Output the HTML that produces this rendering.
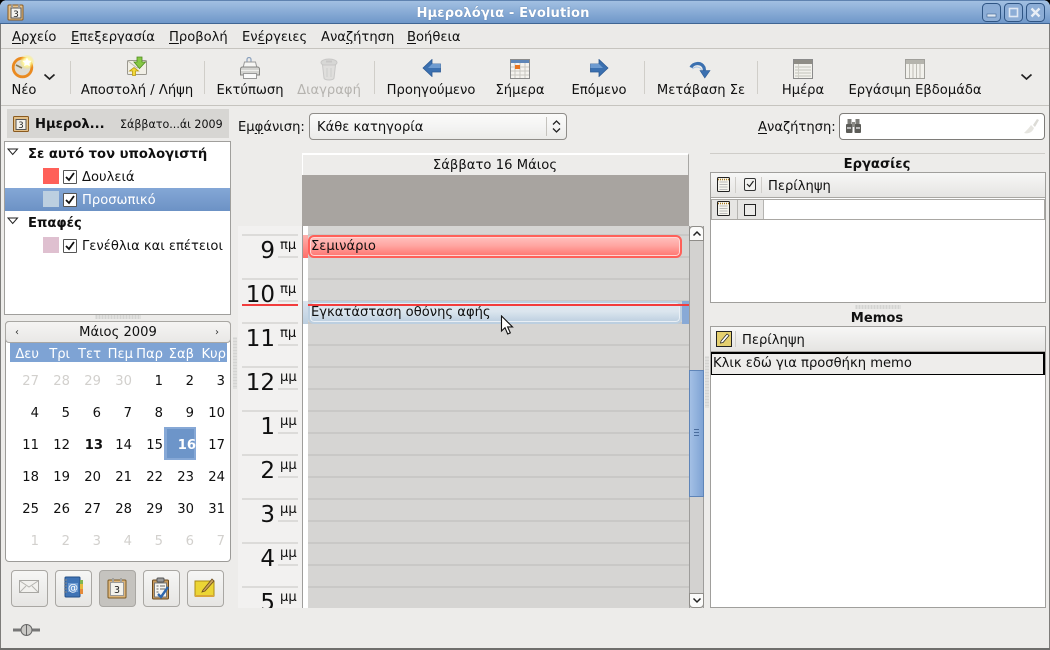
<!DOCTYPE html>
<html><head><meta charset="utf-8"><style>
html,body{margin:0;padding:0;background:#000}
#w{position:relative;width:1050px;height:650px;overflow:hidden;background:#edecea;font:13.13px "DejaVu Sans","Liberation Sans",sans-serif;color:#101010;border-radius:7px 7px 0 0}
#w div,#w span.t,#w svg{position:absolute}
.t{position:absolute;white-space:nowrap;line-height:28px;height:28px}
.c{transform:translateX(-50%)}
.r{transform:translateX(-100%)}
u{text-decoration:underline;text-underline-offset:2px}
.b{font-weight:bold}
.sep{width:1px;height:33px;top:61px;background:#d0cec9}
.dn{color:#fff;transform:translateX(-100%);top:345px}
.d{transform:translateX(-100%)}
.g{color:#d2d0cd}
.h{font-size:23px;line-height:31px;height:31px;transform:translateX(-100%)}
.ap{font-size:13.13px;color:#111;line-height:24px;height:24px}
.ml{left:242px;width:56px;height:2px;background:#dcdbd9}
.sl{left:278px;width:20px;height:2px;background:#dcdbd9}
.gl{left:308px;width:381px;height:2px;background:#c9c8c6}
.nb{width:35px;height:35px;top:570px;border:1px solid #a9a7a3;border-radius:4px;background:linear-gradient(#f6f6f5,#e6e5e3)}
.cb{width:12px;height:12px;border:1px solid #555;border-radius:1px;background:#fff}
</style></head><body><div id="w">

<!-- title bar -->
<div style="left:0;top:0;width:1050px;height:23px;background:linear-gradient(#a2c0e2,#6f97c9);border-top:1px solid #5f83b0;box-sizing:border-box"></div>
<div style="left:0;top:23px;width:1050px;height:1px;background:#3f6593"></div>
<span class="t c b" style="left:503px;top:0px;color:#fff;letter-spacing:.1px;text-shadow:0 0 1px #4a6f9e">Ημερολόγια - Evolution</span>
<svg style="left:7px;top:3px" width="18" height="18" viewBox="0 0 18 18"><rect x="1" y="2" width="15" height="15" rx="1" fill="#e6c48e" stroke="#8a5a1e"/><rect x="4" y="5" width="10" height="10" fill="#f4f3ee" stroke="#555"/><rect x="4" y="1" width="2" height="4" fill="#999"/><rect x="11" y="1" width="2" height="4" fill="#999"/><text x="9" y="14" font-size="9" text-anchor="middle" fill="#222" font-family="DejaVu Sans">3</text></svg>
<svg style="left:982px;top:3px" width="66" height="19" viewBox="0 0 66 19" fill="none"><rect x="0.5" y="0.5" width="18" height="18" rx="4" stroke="#2f5584" fill="#8cadd6"/><rect x="5" y="11" width="9" height="3" fill="#dfe8f3" stroke="#3d6290" stroke-width=".6"/><rect x="22.5" y="0.5" width="18" height="18" rx="4" stroke="#2f5584" fill="#8cadd6"/><rect x="27.500" y="5.500" width="8" height="8" stroke="#dfe8f3" stroke-width="1.600"/><rect x="44.5" y="0.5" width="18" height="18" rx="4" stroke="#2f5584" fill="#8cadd6"/><path d="M49.500 5.500l8 8M57.500 5.500l-8 8" stroke="#e8eef6" stroke-width="2.400"/></svg>

<!-- menu -->
<div style="left:0;top:24px;width:1050px;height:24px;background:#ebeae8"></div>
<div style="left:0;top:48px;width:1050px;height:1px;background:#c6c4bf"></div>
<span class="t" style="left:12px;top:24px"><u>Α</u>ρχείο</span>
<span class="t" style="left:71px;top:24px"><u>Ε</u>πεξεργασία</span>
<span class="t" style="left:169px;top:24px"><u>Π</u>ροβολή</span>
<span class="t" style="left:242px;top:24px">Εν<u>έ</u>ργειες</span>
<span class="t" style="left:321px;top:24px">Ανα<u>ζ</u>ήτηση</span>
<span class="t" style="left:407px;top:24px"><u>Β</u>οήθεια</span>

<!-- toolbar -->
<div style="left:0;top:105px;width:1050px;height:1px;background:#c6c4bf"></div>
<div class="sep" style="left:70px"></div><div class="sep" style="left:204px"></div><div class="sep" style="left:374px"></div><div class="sep" style="left:644px"></div><div class="sep" style="left:757px"></div>
<span class="t c" style="left:24px;top:77px">Νέο</span>
<span class="t c" style="left:137px;top:77px">Αποστολή / Λήψη</span>
<span class="t c" style="left:250px;top:77px">Εκτύπωση</span>
<span class="t c" style="left:329px;top:77px;color:#b5b3af">Διαγραφή</span>
<span class="t c" style="left:431px;top:77px">Προηγούμενο</span>
<span class="t c" style="left:520px;top:77px">Σήμερα</span>
<span class="t c" style="left:599px;top:77px">Επόμενο</span>
<span class="t c" style="left:701px;top:77px">Μετάβαση Σε</span>
<span class="t c" style="left:803px;top:77px">Ημέρα</span>
<span class="t c" style="left:915px;top:77px">Εργάσιμη Εβδομάδα</span>
<!-- new -->
<svg style="left:10px;top:55px" width="26" height="25" viewBox="0 0 26 25"><defs><radialGradient id="gs"><stop offset="0" stop-color="#fff"/><stop offset=".5" stop-color="#fff7a0"/><stop offset="1" stop-color="#ffe84a" stop-opacity="0"/></radialGradient></defs><circle cx="12.500" cy="12.500" r="9.300" fill="#dedbd2" stroke="#ea8a20" stroke-width="2.800"/><path d="M12 13L6 10" stroke="#8a7a50" stroke-width="1.600"/><circle cx="17" cy="7" r="7.500" fill="url(#gs)"/><path d="M17 2.500l1.400 3 3.300.4-2.400 2.200.6 3.200-2.900-1.600-2.900 1.600.6-3.200-2.400-2.200 3.300-.4z" fill="#fff"/></svg>
<svg style="left:43px;top:73px" width="13" height="8" viewBox="0 0 13 8"><path d="M1.500 1.500L6.500 6l5-4.500" fill="none" stroke="#222" stroke-width="1.700"/></svg>
<svg style="left:1020px;top:73px" width="13" height="8" viewBox="0 0 13 8"><path d="M1.500 1.500L6.500 6l5-4.500" fill="none" stroke="#222" stroke-width="1.700"/></svg>
<!-- send/receive -->
<svg style="left:126px;top:56px" width="22" height="21" viewBox="0 0 22 21"><rect x="1.500" y="4.500" width="19" height="14" rx="1" fill="#f1efe6" stroke="#9a9890"/><path d="M2 5l9 7 9-7" fill="none" stroke="#bdbbb0"/><path d="M11 1h5v5h3.500L13.500 12.500 8 6h3z" fill="#86c845" stroke="#4f8a1f" stroke-width=".8"/><path d="M6.500 19.500V15H3.500L8 11.500l4.500 3.500H9.500v4.500z" fill="#f2d93a" stroke="#b99a12" stroke-width=".8"/></svg>
<!-- print -->
<svg style="left:238px;top:57px" width="24" height="24" viewBox="0 0 24 24"><path d="M9 6V2.500a2 2 0 0 1 4 0V6" fill="none" stroke="#8ba1bd" stroke-width="1.200"/><path d="M6.500 5h11l1.500 6H5z" fill="#f6f6f4" stroke="#999"/><path d="M2.500 12a2 2 0 0 1 2-2h15a2 2 0 0 1 2 2v6h-19z" fill="#d4d4d1" stroke="#858582"/><rect x="5.500" y="16.500" width="13" height="5" fill="#fafafa" stroke="#999"/><rect x="3" y="13" width="18" height="1" fill="#efefed"/></svg>
<!-- delete -->
<svg style="left:319px;top:57px" width="20" height="24" viewBox="0 0 20 24" opacity=".55"><ellipse cx="10" cy="5.500" rx="8" ry="3.500" fill="#c6c6c4" stroke="#aaa"/><path d="M3.500 8l1.500 13a5 2 0 0 0 10 0L16.500 8z" fill="#d4d4d2" stroke="#aaa"/><path d="M8 11v9M12 11v9" stroke="#b5b5b3"/><rect x="7" y="3.500" width="6" height="2" fill="#aaa"/></svg>
<!-- prev -->
<svg style="left:422px;top:59px" width="20" height="18" viewBox="0 0 20 18"><path d="M1 9l9-8.500V5h8.500v8H10v4.500z" fill="#3b70b0" stroke="#2c5a94" stroke-width=".8"/><path d="M10 5h8.500v4H6z" fill="#6e9bd0"/></svg>
<!-- today -->
<svg style="left:510px;top:59px" width="20" height="20" viewBox="0 0 20 20"><rect x=".5" y=".5" width="19" height="19" fill="#f5f3ef" stroke="#8b8b8b"/><rect x="1" y="1" width="18" height="3" fill="#5f86b8"/><path d="M1 8h18M1 12h18M1 16h18M5 4v15M10 4v15M15 4v15" stroke="#c9c7c2"/><rect x="5" y="6" width="5" height="4" fill="#e8731e"/></svg>
<!-- next -->
<svg style="left:589px;top:59px" width="20" height="18" viewBox="0 0 20 18"><path d="M19 9L10 .5V5H1.500v8H10v4.500z" fill="#3b70b0" stroke="#2c5a94" stroke-width=".8"/><path d="M10 5H1.500v4H14z" fill="#6e9bd0"/></svg>
<!-- go to -->
<svg style="left:689px;top:60px" width="23" height="19" viewBox="0 0 23 19"><path d="M2 7.500C4 3 12 1.500 15 7.500l.5 3" fill="none" stroke="#3b70b0" stroke-width="3.200"/><path d="M3.500 9C6 6 11 6.500 12.500 10" fill="none" stroke="#a9c4e4" stroke-width="1"/><path d="M11 10.500h10L15.800 18z" fill="#3b70b0" stroke="#2c5a94" stroke-width=".6"/></svg>
<!-- day -->
<svg style="left:793px;top:59px" width="20" height="20" viewBox="0 0 20 20"><rect x=".5" y=".5" width="19" height="19" fill="#f2f1ec" stroke="#8b8b8b"/><rect x="1" y="1" width="18" height="4" fill="#8f8d86"/><path d="M2 8h16M2 11h16M2 14h16M2 17h16" stroke="#c3c2ba"/><path d="M5.500 5v14" stroke="#d0cfc8"/></svg>
<!-- workweek -->
<svg style="left:905px;top:59px" width="20" height="20" viewBox="0 0 20 20"><rect x=".5" y=".5" width="19" height="19" fill="#f2f1ec" stroke="#a09f9a"/><rect x="1" y="1" width="18" height="4" fill="#b5b4ad"/><path d="M4.500 5v14M8 5v14M11.500 5v14M15 5v14" stroke="#bdbcb5"/></svg>

<!-- sidebar head -->
<div style="left:7px;top:109px;width:222px;height:29px;background:#d7d6d3"></div>
<svg style="left:13px;top:115px" width="17" height="17" viewBox="0 0 17 17"><rect x=".5" y="1.500" width="15" height="15" rx="1" fill="#e3c088" stroke="#8a5a1e"/><rect x="3" y="4.500" width="10" height="10" fill="#f4f3ee" stroke="#555"/><text x="8" y="13" font-size="8.500" text-anchor="middle" fill="#222" font-family="DejaVu Sans">3</text></svg>
<span class="t b" style="left:35px;top:111px">Ημερολ...</span>
<span class="t" style="left:120px;top:111px;font-size:11.1px">Σάββατο...άι 2009</span>

<!-- tree -->
<div style="left:4px;top:141px;width:227px;height:174px;box-sizing:border-box;border:1px solid #a09f9c;background:#fff"></div>
<div style="left:5px;top:188px;width:225px;height:23px;background:linear-gradient(#84a7d6,#6c92c5)"></div>
<svg style="left:7px;top:148px" width="12" height="8" viewBox="0 0 12 8"><path d="M1 1h9.500L5.700 6.500z" fill="#fff" stroke="#222"/></svg>
<span class="t b" style="left:28px;top:141px">Σε αυτό τον υπολογιστή</span>
<div style="left:43px;top:168px;width:16px;height:16px;background:#ff6059"></div>
<div class="cb" style="left:63px;top:170px"></div><svg style="left:64px;top:171px" width="12" height="12" viewBox="0 0 12 12"><path d="M2 6l3 3 5-7" fill="none" stroke="#111" stroke-width="1.800"/></svg>
<span class="t" style="left:82px;top:164px">Δουλειά</span>
<div style="left:43px;top:191px;width:16px;height:16px;background:#bccfe0"></div>
<div class="cb" style="left:63px;top:193px"></div><svg style="left:64px;top:194px" width="12" height="12" viewBox="0 0 12 12"><path d="M2 6l3 3 5-7" fill="none" stroke="#111" stroke-width="1.800"/></svg>
<span class="t" style="left:82px;top:187px;color:#fff">Προσωπικό</span>
<svg style="left:7px;top:217px" width="12" height="8" viewBox="0 0 12 8"><path d="M1 1h9.500L5.700 6.500z" fill="#fff" stroke="#222"/></svg>
<span class="t b" style="left:28px;top:210px">Επαφές</span>
<div style="left:43px;top:237px;width:16px;height:16px;background:#dfc0d0"></div>
<div class="cb" style="left:63px;top:239px"></div><svg style="left:64px;top:240px" width="12" height="12" viewBox="0 0 12 12"><path d="M2 6l3 3 5-7" fill="none" stroke="#111" stroke-width="1.800"/></svg>
<span class="t" style="left:82px;top:233px">Γενέθλια και επέτειοι</span>
<div style="left:95px;top:315px;width:46px;height:4px;background-image:radial-gradient(#bbb 40%,transparent 45%);background-size:3px 2px"></div>

<!-- mini calendar -->
<div style="left:5px;top:321px;width:226px;height:241px;box-sizing:border-box;border:1px solid #9c9b98;border-radius:4px;background:#fff"></div>
<div style="left:5px;top:321px;width:226px;height:22px;box-sizing:border-box;border:1px solid #a9a7a3;border-radius:4px;background:linear-gradient(#f5f4f3,#e9e8e6)"></div>
<span class="t" style="left:15px;top:319px;font-size:10px;color:#333">‹</span>
<span class="t" style="left:215px;top:319px;font-size:10px;color:#333">›</span>
<span class="t c" style="left:118px;top:319px">Μάιος 2009</span>
<div style="left:10px;top:343px;width:217px;height:19px;background:#7ea3d4"></div>
<span class="t dn" style="left:39px;top:341px">Δευ</span><span class="t dn" style="left:70px;top:341px">Τρι</span><span class="t dn" style="left:101px;top:341px">Τετ</span><span class="t dn" style="left:133px;top:341px">Πεμ</span><span class="t dn" style="left:163px;top:341px">Παρ</span><span class="t dn" style="left:194px;top:341px">Σαβ</span><span class="t dn" style="left:226px;top:341px">Κυρ</span>
<div style="left:164px;top:427px;width:32px;height:33px;background:#86a8d6"></div>
<div style="left:167px;top:429px;width:27px;height:29px;background:#6d95c9"></div>
<span class="t d g" style="left:39px;top:368px">27</span><span class="t d g" style="left:70px;top:368px">28</span><span class="t d g" style="left:101px;top:368px">29</span><span class="t d g" style="left:132px;top:368px">30</span><span class="t d" style="left:163px;top:368px">1</span><span class="t d" style="left:194px;top:368px">2</span><span class="t d" style="left:225px;top:368px">3</span>
<span class="t d" style="left:39px;top:400px">4</span><span class="t d" style="left:70px;top:400px">5</span><span class="t d" style="left:101px;top:400px">6</span><span class="t d" style="left:132px;top:400px">7</span><span class="t d" style="left:163px;top:400px">8</span><span class="t d" style="left:194px;top:400px">9</span><span class="t d" style="left:225px;top:400px">10</span>
<span class="t d" style="left:39px;top:432px">11</span><span class="t d" style="left:70px;top:432px">12</span><span class="t d b" style="left:103px;top:432px">13</span><span class="t d" style="left:132px;top:432px">14</span><span class="t d" style="left:163px;top:432px">15</span><span class="t d b" style="left:196px;top:432px;color:#fff">16</span><span class="t d" style="left:225px;top:432px">17</span>
<span class="t d" style="left:39px;top:464px">18</span><span class="t d" style="left:70px;top:464px">19</span><span class="t d" style="left:101px;top:464px">20</span><span class="t d" style="left:132px;top:464px">21</span><span class="t d" style="left:163px;top:464px">22</span><span class="t d" style="left:194px;top:464px">23</span><span class="t d" style="left:225px;top:464px">24</span>
<span class="t d" style="left:39px;top:496px">25</span><span class="t d" style="left:70px;top:496px">26</span><span class="t d" style="left:101px;top:496px">27</span><span class="t d" style="left:132px;top:496px">28</span><span class="t d" style="left:163px;top:496px">29</span><span class="t d" style="left:194px;top:496px">30</span><span class="t d" style="left:225px;top:496px">31</span>
<span class="t d g" style="left:39px;top:528px">1</span><span class="t d g" style="left:70px;top:528px">2</span><span class="t d g" style="left:101px;top:528px">3</span><span class="t d g" style="left:132px;top:528px">4</span><span class="t d g" style="left:163px;top:528px">5</span><span class="t d g" style="left:194px;top:528px">6</span><span class="t d g" style="left:225px;top:528px">7</span>

<!-- switcher -->
<div class="nb" style="left:11px"></div><div class="nb" style="left:55px"></div><div class="nb" style="left:99px;background:#c5c3bf"></div><div class="nb" style="left:143px"></div><div class="nb" style="left:187px"></div>
<svg style="left:19px;top:579px" width="20" height="16" viewBox="0 0 20 16"><rect x=".5" y="1.500" width="19" height="12" fill="#f2f1ee" stroke="#a8a7a3"/><path d="M1 2l9 6 9-6M1 13l6-6M19 13l-6-6" fill="none" stroke="#b5b4b0"/></svg>
<svg style="left:62px;top:576px" width="23" height="23" viewBox="0 0 23 23"><rect x="3" y="1" width="15" height="20" rx="1" fill="#3f73b5" stroke="#234f88"/><rect x="18" y="4" width="3" height="4" fill="#7fb650"/><rect x="18" y="8" width="3" height="5" fill="#e7b93d"/><rect x="18" y="13" width="3" height="5" fill="#e58a3a"/><path d="M2 4h3M2 7h3M2 10h3M2 13h3M2 16h3" stroke="#888"/><rect x="6" y="7" width="10" height="9" fill="#6c9ad2"/><text x="11" y="15" font-size="10" text-anchor="middle" fill="#fff" font-family="DejaVu Sans">@</text></svg>
<svg style="left:107px;top:577px" width="21" height="22" viewBox="0 0 21 22"><rect x="1" y="3" width="18" height="18" rx="1" fill="#ddb67c" stroke="#7c5a24"/><rect x="3.500" y="5.500" width="13" height="13" fill="#f3f2ec" stroke="#999"/><rect x="5" y="1" width="2" height="5" fill="#a3a29e"/><rect x="13" y="1" width="2" height="5" fill="#a3a29e"/><text x="10" y="16" font-size="9.500" text-anchor="middle" fill="#222" font-family="DejaVu Sans">3</text></svg>
<svg style="left:151px;top:577px" width="22" height="23" viewBox="0 0 22 23"><rect x="1.500" y="3" width="16" height="19" rx="1" fill="#c89a5a" stroke="#69481e"/><rect x="3.500" y="6" width="12" height="14" fill="#f5f4ef" stroke="#777"/><rect x="6" y="1" width="7" height="4" rx="1" fill="#999" stroke="#555"/><path d="M5.500 9h2M9 9h5M5.500 12h2M9 12h5M5.500 15h2" stroke="#666"/><path d="M7 17l3 3 7-10" fill="none" stroke="#2f67ad" stroke-width="2.400"/></svg>
<svg style="left:194px;top:577px" width="23" height="22" viewBox="0 0 23 22"><rect x="1" y="4" width="19" height="15" fill="#ecd535" stroke="#ab8c14"/><rect x="1" y="18" width="19" height="2" fill="#d9a63a"/><path d="M9 13l9-11 2 2-9 10-3 1z" fill="#c9a25c" stroke="#6d4d1a" stroke-width=".8"/></svg>

<!-- status -->
<svg style="left:13px;top:622px" width="27" height="16" viewBox="0 0 27 16"><path d="M0 8h9M18 8h9" stroke="#777" stroke-width="3"/><circle cx="13.500" cy="8" r="5.500" fill="#c9c8c5" stroke="#666"/><path d="M13.500 2.500v11" stroke="#666"/></svg>

<!-- filter bar -->
<span class="t" style="left:238px;top:114px">Εμ<u>φ</u>άνιση:</span>
<div style="left:309px;top:113px;width:258px;height:27px;box-sizing:border-box;border:1px solid #8f8d89;border-radius:4px;background:linear-gradient(#fbfbfa,#f4f4f3 50%,#ebebe9)"></div>
<span class="t" style="left:317px;top:114px">Κάθε κατηγορία</span>
<div style="left:546px;top:117px;width:1px;height:19px;background:#c5c3be"></div>
<svg style="left:551px;top:119px" width="11" height="15" viewBox="0 0 11 15"><path d="M2 5.500L5.500 2 9 5.500M2 9.500L5.500 13 9 9.500" fill="none" stroke="#222" stroke-width="1.300"/></svg>
<span class="t" style="left:758px;top:114px"><u>Α</u>ναζήτηση:</span>
<div style="left:839px;top:113px;width:206px;height:27px;box-sizing:border-box;border:1px solid #7e7c79;border-radius:4px;background:#fff"></div>
<svg style="left:845px;top:118px" width="17" height="16" viewBox="0 0 17 16"><rect x="1" y="6" width="6.500" height="9" rx="1" fill="#5c5c58"/><rect x="9.500" y="6" width="6.500" height="9" rx="1" fill="#5c5c58"/><rect x="2.500" y="1" width="4" height="5" fill="#7c7c78"/><rect x="10.500" y="1" width="4" height="5" fill="#7c7c78"/><rect x="7" y="4" width="3" height="5" fill="#8a8a86"/><rect x="2" y="9" width="4" height="2" fill="#bbb"/><rect x="11" y="9" width="4" height="2" fill="#bbb"/></svg>
<svg style="left:1023px;top:117px" width="18" height="18" viewBox="0 0 18 18"><path d="M1 16c4 1 8 0 10-5l-3-3C6 11 4 13 1 16z" fill="#e6e5e0"/><path d="M10 8l4-6 2 1-4 7z" fill="#dcdbd6"/></svg>

<!-- day view -->
<div style="left:302px;top:153px;width:387px;height:23px;box-sizing:border-box;background:#edecea;border-top:2px solid #fff;border-left:1px solid #fff;border-right:1px solid #a8a7a4"></div>
<span class="t c" style="left:495px;top:152px;letter-spacing:.05px">Σάββατο 16 Μάιος</span>
<div style="left:302px;top:175px;width:387px;height:51px;background:#a8a4a0"></div>
<div style="left:238px;top:226px;width:64px;height:382px;background:#f2f1f0"></div>
<div style="left:302px;top:226px;width:1px;height:382px;background:#9e9d9b"></div>
<div style="left:303px;top:226px;width:5px;height:382px;background:#fff"></div>
<div style="left:308px;top:226px;width:381px;height:382px;background:#d6d5d3"></div>

<div class="gl" style="top:234px"></div><div class="gl" style="top:256px"></div><div class="gl" style="top:278px"></div><div class="gl" style="top:300px"></div><div class="gl" style="top:322px"></div><div class="gl" style="top:344px"></div><div class="gl" style="top:366px"></div><div class="gl" style="top:388px"></div><div class="gl" style="top:410px"></div><div class="gl" style="top:432px"></div><div class="gl" style="top:454px"></div><div class="gl" style="top:476px"></div><div class="gl" style="top:498px"></div><div class="gl" style="top:520px"></div><div class="gl" style="top:542px"></div><div class="gl" style="top:564px"></div><div class="gl" style="top:586px"></div>

<div class="ml" style="top:234px"></div><div class="sl" style="top:256px"></div><div class="ml" style="top:278px"></div><div class="sl" style="top:300px"></div><div class="ml" style="top:322px"></div><div class="sl" style="top:344px"></div><div class="ml" style="top:366px"></div><div class="sl" style="top:388px"></div><div class="ml" style="top:410px"></div><div class="sl" style="top:432px"></div><div class="ml" style="top:454px"></div><div class="sl" style="top:476px"></div><div class="ml" style="top:498px"></div><div class="sl" style="top:520px"></div><div class="ml" style="top:542px"></div><div class="sl" style="top:564px"></div><div class="ml" style="top:586px"></div>

<span class="t h" style="left:275px;top:236px">9</span><span class="t ap" style="left:280px;top:234px">πμ</span>
<span class="t h" style="left:275px;top:280px">10</span><span class="t ap" style="left:280px;top:278px">πμ</span>
<span class="t h" style="left:275px;top:324px">11</span><span class="t ap" style="left:280px;top:322px">πμ</span>
<span class="t h" style="left:275px;top:368px">12</span><span class="t ap" style="left:280px;top:366px">μμ</span>
<span class="t h" style="left:275px;top:412px">1</span><span class="t ap" style="left:280px;top:410px">μμ</span>
<span class="t h" style="left:275px;top:456px">2</span><span class="t ap" style="left:280px;top:454px">μμ</span>
<span class="t h" style="left:275px;top:500px">3</span><span class="t ap" style="left:280px;top:498px">μμ</span>
<span class="t h" style="left:275px;top:544px">4</span><span class="t ap" style="left:280px;top:542px">μμ</span>
<div style="left:238px;top:580px;width:64px;height:28px;overflow:hidden"><span class="t h" style="left:37px;top:8px">5</span><span class="t ap" style="left:42px;top:6px">μμ</span></div>

<!-- events -->
<div style="left:303px;top:235px;width:5px;height:23px;background:linear-gradient(#ffb0ac,#ff6f69)"></div>
<div style="left:308px;top:235px;width:374px;height:23px;box-sizing:border-box;border:2px solid #ff6059;border-radius:6px;background:linear-gradient(#ffc0bd,#ffa6a2 45%,#ff7670);box-shadow:inset 0 0 0 1px #ffd6d4"></div>
<span class="t" style="left:311px;top:233px">Σεμινάριο</span>
<div style="left:303px;top:301px;width:5px;height:23px;background:linear-gradient(#dbe4ee,#bccfe0)"></div>
<div style="left:682px;top:301px;width:7px;height:23px;background:#88a9d6"></div>
<div style="left:308px;top:301px;width:374px;height:23px;box-sizing:border-box;border:2px solid #bccfe0;border-radius:6px;background:linear-gradient(#e0e8f0,#dbe5ee 45%,#bccfe0);box-shadow:inset 0 0 0 1px #e9eff5"></div>
<span class="t" style="left:311px;top:299px">Εγκατάσταση οθόνης αφής</span>
<div style="left:242px;top:304px;width:56px;height:2px;background:#f23c3c"></div>
<div style="left:308px;top:304px;width:381px;height:2px;background:#f23c3c"></div>
<svg style="left:500px;top:315px" width="16" height="21" viewBox="0 0 16 21"><path d="M1.500 1v15l3.500-3.300 2.700 6.300 2.600-1.100-2.700-6h4.900z" fill="#fff" stroke="#111" stroke-width="1.100"/></svg>

<!-- scrollbar -->
<div style="left:689px;top:226px;width:15px;height:382px;box-sizing:border-box;background:#d3d2d0;border-left:1px solid #9e9d9b;border-right:1px solid #9e9d9b"></div>
<div style="left:689px;top:226px;width:15px;height:15px;box-sizing:border-box;border:1px solid #8f8d89;border-radius:4px 4px 0 0;background:#fbfbfa"></div>
<svg style="left:692px;top:230px" width="10" height="7" viewBox="0 0 10 7"><path d="M1.500 5.500L5 2l3.500 3.500" fill="none" stroke="#222" stroke-width="1.500"/></svg>
<div style="left:689px;top:593px;width:15px;height:15px;box-sizing:border-box;border:1px solid #8f8d89;border-radius:0 0 4px 4px;background:#fbfbfa"></div>
<svg style="left:692px;top:597px" width="10" height="7" viewBox="0 0 10 7"><path d="M1.500 1.500L5 5l3.500-3.500" fill="none" stroke="#222" stroke-width="1.500"/></svg>
<div style="left:689px;top:370px;width:15px;height:127px;box-sizing:border-box;border:1px solid #5f85b8;background:linear-gradient(90deg,#a3c0e5,#7fa3d4)"></div>
<div style="left:694px;top:429px;width:5px;height:1px;background:#4a6c9c"></div><div style="left:694px;top:432px;width:5px;height:1px;background:#4a6c9c"></div><div style="left:694px;top:435px;width:5px;height:1px;background:#4a6c9c"></div>
<div style="left:705px;top:356px;width:4px;height:52px;background-image:radial-gradient(#bbb 40%,transparent 45%);background-size:2px 3px"></div>
<div style="left:233px;top:337px;width:4px;height:52px;background-image:radial-gradient(#bbb 40%,transparent 45%);background-size:2px 3px"></div>

<!-- tasks -->
<div style="left:710px;top:153px;width:335px;height:1px;background:#cfcdc9"></div>
<span class="t c b" style="left:877px;top:151px">Εργασίες</span>
<div style="left:710px;top:172px;width:336px;height:131px;box-sizing:border-box;border:1px solid #a09f9c;background:#fff"></div>
<div style="left:711px;top:173px;width:334px;height:24px;background:linear-gradient(#f7f7f6,#e5e4e2);border-bottom:1px solid #a9a7a3"></div>
<div style="left:735px;top:177px;width:1px;height:16px;background:#cfcdc9"></div><div style="left:761px;top:177px;width:1px;height:16px;background:#cfcdc9"></div>
<svg style="left:717px;top:177px" width="14" height="16" viewBox="0 0 14 16"><rect x=".5" y=".5" width="12" height="14" rx="1" fill="#f6f5ee" stroke="#222"/><path d="M1 2.500h11" stroke="#a8781e" stroke-width="1.500" stroke-dasharray="1 1"/><path d="M2.500 5h8M2.500 7.500h8M2.500 10h8M2.500 12.500h8" stroke="#bbb"/></svg>
<div style="left:744px;top:178px;width:10px;height:11px;border:1px solid #333;border-radius:2px;background:#f2f2f0"></div>
<svg style="left:745px;top:179px" width="11" height="11" viewBox="0 0 11 11"><path d="M2 5l2.500 2.500L8.500 2" fill="none" stroke="#222" stroke-width="1.200"/></svg>
<span class="t" style="left:768px;top:173px">Περίληψη</span>
<div style="left:711px;top:199px;width:334px;height:21px;box-sizing:border-box;border:1px solid #a9a7a3;background:#fff"></div>
<div style="left:712px;top:200px;width:25px;height:19px;background:#e6e5e3;border-right:1px solid #b5b4b1"></div>
<div style="left:738px;top:200px;width:25px;height:19px;background:#e6e5e3;border-right:1px solid #b5b4b1"></div>
<svg style="left:717px;top:201px" width="14" height="16" viewBox="0 0 14 16"><rect x=".5" y=".5" width="12" height="14" rx="1" fill="#f6f5ee" stroke="#222"/><path d="M1 2.500h11" stroke="#a8781e" stroke-width="1.500" stroke-dasharray="1 1"/><path d="M2.500 5h8M2.500 7.500h8M2.500 10h8M2.500 12.500h8" stroke="#bbb"/></svg>
<div style="left:744px;top:204px;width:10px;height:10px;border:1px solid #222;background:#ecebe9"></div>
<div style="left:855px;top:305px;width:46px;height:4px;background-image:radial-gradient(#bbb 40%,transparent 45%);background-size:3px 2px"></div>

<!-- memos -->
<span class="t c b" style="left:877px;top:305px">Memos</span>
<div style="left:710px;top:326px;width:336px;height:282px;box-sizing:border-box;border:1px solid #a09f9c;background:#fff"></div>
<div style="left:711px;top:327px;width:334px;height:24px;background:linear-gradient(#f7f7f6,#e5e4e2);border-bottom:1px solid #a9a7a3"></div>
<div style="left:735px;top:331px;width:1px;height:16px;background:#cfcdc9"></div>
<svg style="left:716px;top:331px" width="16" height="16" viewBox="0 0 16 16"><rect x=".5" y=".5" width="15" height="15" fill="#e4cf6f" stroke="#222"/><path d="M5 10l6-7 2 1.500-6 7-2.500.5z" fill="#fff" stroke="#222" stroke-width=".7"/></svg>
<span class="t" style="left:742px;top:327px">Περίληψη</span>
<div style="left:711px;top:352px;width:334px;height:23px;box-sizing:border-box;border:1px solid #000;border-width:2px 2px 1px 1px;background:#eeedeb"></div>
<span class="t" style="left:713px;top:350px">Κλικ εδώ για προσθήκη memo</span>

<!-- frame -->
<div style="left:0;top:24px;width:1px;height:626px;background:#7d7c7a"></div>
<div style="left:1049px;top:24px;width:1px;height:626px;background:#7d7c7a"></div>
<div style="left:0;top:648px;width:1050px;height:2px;background:#6f6e6c"></div>
</div></body></html>
